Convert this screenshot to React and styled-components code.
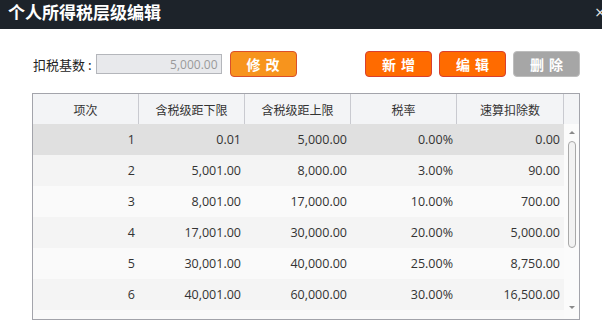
import React from "react";
import styled, { createGlobalStyle } from "styled-components";

const rows = [
	["1", "0.01", "5,000.00", "0.00%", "0.00"],
	["2", "5,001.00", "8,000.00", "3.00%", "90.00"],
	["3", "8,001.00", "17,000.00", "10.00%", "700.00"],
	["4", "17,001.00", "30,000.00", "20.00%", "5,000.00"],
	["5", "30,001.00", "40,000.00", "25.00%", "8,750.00"],
	["6", "40,001.00", "60,000.00", "30.00%", "16,500.00"],
	["", "", "", "", ""],
];

const headers = ["项次", "含税级距下限", "含税级距上限", "税率", "速算扣除数"];

const GlobalStyle = createGlobalStyle`
	html, body {
		margin: 0;
		padding: 0;
		background: #ffffff;
		font-family: "Open Sans", "Noto Sans CJK SC", sans-serif;
	}
`;

const Dialog = styled.div`
	width: 602px;
	height: 324px;
	overflow: hidden;
	background: #ffffff;
	display: flex;
	flex-direction: column;
`;

const TitleBar = styled.div`
	height: 29px;
	flex-shrink: 0;
	background: #1d232a;
	display: flex;
	justify-content: space-between;
	align-items: flex-start;
	padding: 1px 0 0 8px;
	box-sizing: border-box;
	color: #ffffff;
`;

const Title = styled.h1`
	margin: 0;
	font-family: "Noto Sans CJK SC", sans-serif;
	font-weight: bold;
	font-size: 17px;
	line-height: 22px;
`;

const Close = styled.span`
	font-family: "DejaVu Sans", sans-serif;
	font-size: 14px;
	line-height: 22px;
	margin-right: -4px;
	color: #e8e8e8;
`;

const Toolbar = styled.div`
	display: flex;
	justify-content: space-between;
	align-items: center;
	padding: 22px 22px 0 33px;
	height: 26px;
`;

const Group = styled.div`
	display: flex;
	align-items: center;
	gap: ${(p) => p.$gap}px;
`;

const Label = styled.span`
	font-family: "Noto Sans CJK SC", sans-serif;
	font-size: 13px;
	color: #222;
	margin-right: 4px;
	white-space: pre;
`;

const Input = styled.input`
	box-sizing: border-box;
	width: 126px;
	height: 20px;
	margin: 0 8px 0 0;
	border: 1px solid #b4b6bb;
	background: #e8e9ec;
	color: #9a9a9a;
	text-align: right;
	font-family: "Open Sans", sans-serif;
	font-size: 12px;
	padding: 0 3px 0 0;
	outline: none;
`;

const Button = styled.button`
	box-sizing: border-box;
	width: 67px;
	height: 26px;
	border-radius: 4px;
	border: 1px solid ${(p) => p.$border};
	background: ${(p) => p.$bg};
	color: #ffffff;
	font-family: "Noto Sans CJK SC", sans-serif;
	font-weight: bold;
	font-size: 14px;
	letter-spacing: 5px;
	padding: 0 0 0 5px;
	line-height: 24px;
`;

const Table = styled.div`
	margin: 16px 22px 0 32px;
	border: 1px solid #a3a4ab;
	height: 225px;
	overflow: hidden;
	display: flex;
	flex-direction: column;
`;

const HeadRow = styled.div`
	display: grid;
	grid-template-columns: 106px 106px 106px 106px 107px 1fr;
	height: 30px;
	flex-shrink: 0;
	background: #f3f4f6;
`;

const HeadCell = styled.div`
	border-right: 1px solid #c9cad0;
	display: flex;
	align-items: center;
	justify-content: center;
	font-family: "Noto Sans CJK SC", sans-serif;
	font-size: 12px;
	color: #333;
	&:last-child {
		border-right: none;
	}
`;

const Body = styled.div`
	display: flex;
	flex: 1;
	overflow: hidden;
`;

const Rows = styled.div`
	width: 531px;
	flex-shrink: 0;
`;

const Row = styled.div`
	display: grid;
	grid-template-columns: 106px 106px 106px 106px 107px;
	height: 31px;
	background: ${(p) => (p.$selected ? "#e0e0e0" : p.$odd ? "#f4f4f4" : "#fafafa")};
`;

const Cell = styled.div`
	display: flex;
	align-items: center;
	justify-content: flex-end;
	padding-right: 4px;
	font-size: 12.5px;
	color: #333;
`;

const Scroll = styled.div`
	flex: 1;
	background: #fbfbfb;
	display: flex;
	flex-direction: column;
	align-items: center;
`;

const Arrow = styled.div`
	width: 0;
	height: 0;
	border-left: 3px solid transparent;
	border-right: 3px solid transparent;
	${(p) => (p.$down ? "border-top: 3px solid #8a8a8a;" : "border-bottom: 3px solid #8a8a8a;")}
	margin-top: ${(p) => p.$mt}px;
`;

const Thumb = styled.div`
	box-sizing: border-box;
	width: 8px;
	height: 107px;
	margin-top: 7px;
	border: 1px solid #a9a9a9;
	border-radius: 4px;
	background: #f2f2f2;
`;

export default function App() {
	return (
		<Dialog>
			<GlobalStyle />
			<TitleBar>
				<Title>个人所得税层级编辑</Title>
				<Close>×</Close>
			</TitleBar>
			<Toolbar>
				<Group $gap={0}>
					<Label>扣税基数 :</Label>
					<Input readOnly value="5,000.00" />
					<Button $bg="#f7941d" $border="#d9502c">
						修改
					</Button>
				</Group>
				<Group $gap={7}>
					<Button $bg="#ff6b00" $border="#d8402f">
						新增
					</Button>
					<Button $bg="#ff6b00" $border="#d8402f">
						编辑
					</Button>
					<Button $bg="#a6a6a6" $border="#bdbdbd">
						删除
					</Button>
				</Group>
			</Toolbar>
			<Table>
				<HeadRow>
					{headers.map((h) => (
						<HeadCell key={h}>{h}</HeadCell>
					))}
					<HeadCell />
				</HeadRow>
				<Body>
					<Rows>
						{rows.map((r, i) => (
							<Row key={i} $selected={i === 0} $odd={i % 2 === 1}>
								{r.map((c, j) => (
									<Cell key={j}>{c}</Cell>
								))}
							</Row>
						))}
					</Rows>
					<Scroll>
						<Arrow $mt={7} />
						<Thumb />
						<Arrow $down $mt={58} />
					</Scroll>
				</Body>
			</Table>
		</Dialog>
	);
}
